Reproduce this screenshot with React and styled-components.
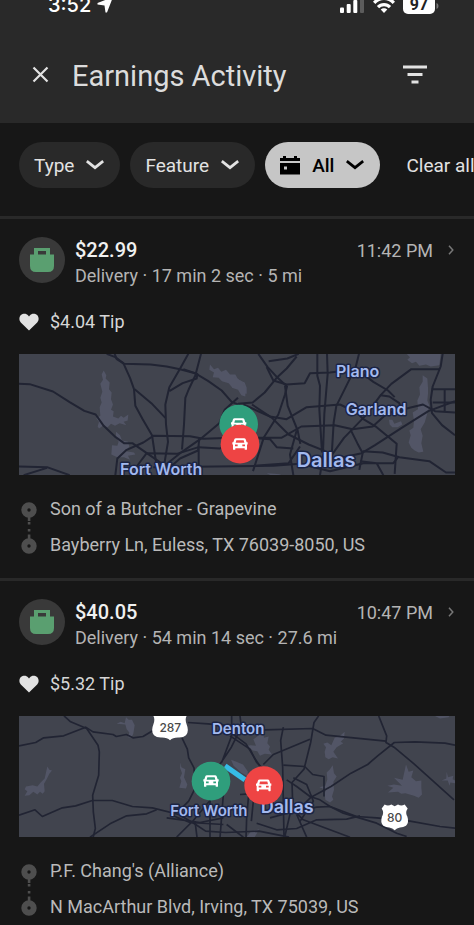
import React, { useState } from "react";
import styled, { createGlobalStyle } from "styled-components";

const GlobalStyle = createGlobalStyle`
  * {
    box-sizing: border-box;
  }
  body {
    margin: 0;
    background-color: #171717;
    color: #e2e2e2;
    font-family: Roboto, Inter, sans-serif;
    overflow-x: hidden;
  }
  button {
    font-family: inherit;
    border: none;
    padding: 0;
    background: none;
    color: inherit;
    cursor: pointer;
  }
  svg {
    display: block;
    flex-shrink: 0;
  }
`;

const Container = styled.div`
  min-height: 100vh;
  overflow: hidden;
`;

const Header = styled.header`
  background-color: #292929;
  height: 123px;
`;
const StatusBar = styled.div`
  display: flex;
  justify-content: space-between;
  align-items: flex-end;
  height: 14px;
  padding: 0 35px 0 48px;
  overflow: hidden;
`;
const StatusGroup = styled.div`
  display: flex;
  align-items: flex-end;
  gap: ${(props) => props.$gap}px;
`;
const Clock = styled.span`
  font-family: Inter, sans-serif;
  font-size: 20px;
  font-weight: 500;
  line-height: 18px;
  color: white;
`;
const TitleBar = styled.div`
  display: flex;
  align-items: center;
  height: 120px;
  padding: 0 47px 0 32px;
`;
const Title = styled.h1`
  flex: 1;
  margin: 0 0 0 23px;
  padding-top: 4px;
  font-size: 29px;
  font-weight: 400;
  line-height: 32px;
  color: #dcdcdc;
`;
const IconButton = styled.button`
  display: flex;
`;

const Filters = styled.div`
  display: flex;
  align-items: center;
  gap: 10px;
  padding: 19px 0 28px 19px;
  white-space: nowrap;
`;
const Chip = styled.button`
  display: flex;
  align-items: center;
  justify-content: space-between;
  gap: 12px;
  flex-shrink: 0;
  height: 46px;
  padding: 0 16px 0 15px;
  border-radius: 23px;
  font-size: 19px;
  font-weight: ${(props) => (props.$active ? 500 : 400)};
  background-color: ${(props) => (props.$active ? "#c6c6c6" : "#292929")};
  color: ${(props) => (props.$active ? "black" : "#e2e2e2")};
`;
const ClearButton = styled.button`
  flex-shrink: 0;
  margin-left: 16px;
  font-size: 19px;
  font-weight: 400;
`;

const Entry = styled.article`
  border-top: 3px solid #292929;
  padding: 18px 19px 15px;
`;
const EntryHead = styled.div`
  display: flex;
  gap: 10px;
  height: 46px;
`;
const Avatar = styled.div`
  display: flex;
  align-items: center;
  justify-content: center;
  flex-shrink: 0;
  width: 46px;
  height: 46px;
  border-radius: 50%;
  background-color: #393939;
`;
const Summary = styled.div`
  flex: 1;
  min-width: 0;
`;
const SummaryRow = styled.div`
  display: flex;
  justify-content: space-between;
  align-items: center;
  height: 26px;
`;
const Amount = styled.h2`
  margin: 0;
  font-size: 20px;
  font-weight: 500;
  line-height: 26px;
  color: #f0f0f0;
`;
const TimeButton = styled.button`
  display: flex;
  align-items: center;
  gap: 14px;
  font-size: 18px;
  font-weight: 400;
  color: #b4b4b4;
`;
const Detail = styled.p`
  margin: 0;
  font-size: 18px;
  font-weight: 400;
  line-height: 26px;
  color: #b4b4b4;
`;
const Tip = styled.div`
  display: flex;
  align-items: center;
  gap: 11px;
  margin: 27px 0 20px;
  font-size: 18px;
  font-weight: 400;
  line-height: 24px;
  color: #d6d6d6;
`;
const Map = styled.svg`
  width: 100%;
  height: 121px;
  background-color: #41444e;
`;
const MapLabel = styled.text`
  font-family: Inter, sans-serif;
  font-size: ${(props) => props.$size}px;
  font-weight: 600;
  fill: #a3b9ee;
  stroke: #1c2545;
  stroke-width: 9px;
  stroke-linejoin: round;
  paint-order: stroke;
`;
const ShieldText = styled.text`
  font-family: Inter, sans-serif;
  font-size: 36px;
  font-weight: 500;
  fill: #4a4a4a;
  text-anchor: middle;
`;
const Route = styled.div`
  display: flex;
  gap: 11px;
  margin-top: 16px;
`;
const Stops = styled.ul`
  list-style: none;
  margin: 0;
  padding: 0;
`;
const Stop = styled.li`
  font-size: 18px;
  font-weight: 400;
  line-height: 36px;
  color: #bababa;
  white-space: nowrap;
`;

function Chevron() {
  return (
    <svg width="18" height="10" viewBox="0 0 18 10" fill="none" stroke="currentColor" strokeWidth="2.8">
      <path d="M.8 1.2 9 7.6l8.2-6.4" />
    </svg>
  );
}

function CalendarIcon() {
  return (
    <svg width="20" height="20" viewBox="0 0 20 20">
      <path
        fill="currentColor"
        fillRule="evenodd"
        d="M0 3h3V1h3v2h8V1h3v2h3v3H0zM0 8h20v11.500H0zM4 11.500v3h3v-3z"
      />
    </svg>
  );
}

function BagIcon() {
  return (
    <svg width="24" height="24" viewBox="0 0 24 24">
      <path
        fill="#5a9f70"
        fillRule="evenodd"
        d="M4 0h16v6.500h4V18q0 6-6 6H6q-6 0-6-6V6.500h4zM8 3v3.500h8V3z"
      />
    </svg>
  );
}

function HeartIcon() {
  return (
    <svg width="20" height="18" viewBox="0 0 20 18">
      <path
        fill="#e2e2e2"
        d="M10 17.500 1.800 9.400C-.2 7.200 0 4 1.900 2.100 4 .1 7.500.3 9.200 2.400l.8 1 .8-1C12.500.3 16 .1 18.100 2.100 20 4 20.200 7.200 18.200 9.400z"
      />
    </svg>
  );
}

function RouteLine() {
  return (
    <svg width="20" height="72" viewBox="0 0 20 72">
      <g fill="none" stroke="#4e4e4e" strokeWidth="6">
        <circle cx="10" cy="19" r="4.700" />
        <circle cx="10" cy="55" r="4.700" />
      </g>
      <path
        fill="#4e4e4e"
        d="M8.800 26h2.600v4H8.800zM8.800 31h2.600v2.400H8.800zM8.800 38h2.600v2.600H8.800zM8.800 43.500h2.600v5H8.800z"
      />
    </svg>
  );
}

function CarPin({ x, y, color }) {
  return (
    <g transform={`translate(${x} ${y})`}>
      <circle r="58" fill={color} />
      <path
        fill="white"
        fillRule="evenodd"
        d="M-12-18H12Q16-18 17-15L20-6H23V1H21V15Q21 17 19 17H16Q14 17 14 15V12H-14V15Q-14 17-16 17H-19Q-21 17-21 15V1H-23V-6H-20L-17-15Q-16-18-12-18ZM-11-12-13-4H13L11-12ZM-15 1v5h8V1ZM7 1v5h8V1Z"
      />
    </g>
  );
}

function MetroMap() {
  return (
    <Map viewBox="27 28 1308 364" preserveAspectRatio="xMidYMid slice" role="img" aria-label="Trip map">
      <g fill="#525566">
        <path d="M281 78l8 14-2 10 12 12-2 20 8 10-2 20 6 16-6 16 8 4-2 16 16 6 8-8 8 6 14-10-2 18-12 4 8 10-20-6-14 8-12-6-10 10-14-4-12 8-4-6 4-14-8-10 12-8-2-26 6-14-4-14 6-18-6-24 8-12-4-16z" />
        <path d="M318 262l12 10 6 16 18 4 4 14-10 14 24 4 4 6-22 4 6 12-18-8-20 0-18-8 2-28 16 2 4-12-8-12z" />
        <path d="M600 60l12 14 12-4 10 12 14-6 12 14 16 0 8 14 20 10 6 16 0 18-14-2-10-14-20-4-10-12-20-6-10-10-18-2 4-14-14-8z" />
        <path d="M666 92l16 10 14 10 10 18 0 26-12-4-10-16-18-6z" />
        <path d="M1190 28l10 10-8 8 14 10 12-4 10 12 20-4 14 6 26-4 4-34z" />
        <path d="M1238 92l14 10 2 28 0 18-2 20 6 16-8 30-6 20-12 20 6 20-4 22 6 26-14 2-12-6-10-8-8-16 6-22-4-14 12-8 2-22-4-24 16-10-2-26 8-18-2-22 10-16z" />
        <path d="M1137 226l10 0 6 12 20-8 4 10-14 8-16 0-8-8z" />
        <path d="M770 386l12 6h24l8-2-20-2z" />
      </g>
      <g fill="none" stroke="#212433" strokeWidth="6" strokeLinejoin="round">
        <path d="M27 118l32 1 70 22 50 32 44 26 34 11 24 34 36 34 25 18 25 0 90 62" />
        <path d="M290 28l26 10 26 20 80 2 48 6 40 8 45 12 40 24 40 28 30 34 25 10" />
        <path d="M314 28l6 16 20 12 20 44 12 34 4 50 22 40 28 48 6 40 6 40" />
        <path d="M374 134l50 42 42 44" />
        <path d="M535 28l-25 45-32 55-12 52 2 60 6 52-10 60" />
        <path d="M573 28l-17 65-20 42-10 25-4 80-6 75" />
        <path d="M478 140l40-24 42-14 2-14-42-14" />
        <path d="M316 392l6-50 28-26 50-22 30-20 110 1 40 8 110-4 80 2" />
        <path d="M27 366l84 2 68 24M111 370l-70 22" />
        <path d="M380 366l30-40 90 2 66-20 64 4 30-18" />
        <path d="M456 370l60-48 60-42 52-44 16-40 40-36" />
        <path d="M460 386l50-44 54-24 4-36 M566 300v92M430 368l360-4 80-6" />
        <path d="M745 28l28 40 30 32 28 26-6 24-20 60-44 70-32 100" />
        <path d="M866 28l-34 14-56 8M860 36l-30 36-30 28-36 44-36 30-44 4" />
        <path d="M770 68l20 40 40 12 54-4 16-30 60-2 80-10 50 38 44 26 20 20" />
        <path d="M922 28v66l8 30-2 70 8 130M951 28l2 60-10 120-4 116" />
        <path d="M1047 28l-10 40-28 56-30 60-8 50-6 100" />
        <path d="M825 124l8 60 30 74 8 40 M700 180l80 36 50 8 60-36 100-8 50 24 20 20 40 24 60 50-6 90" />
        <path d="M726 180l60 40 50 50 60 30 50 20" />
        <path d="M724 280l90 0 60-34 100-4 54 12 60-8 40-36M720 280l60 4 20 24 50 4" />
        <path d="M850 392l-10-62 20-72 M724 200l-8 60 M870 306l-34 50-104 8" />
        <path d="M1290 74l-86 0-60 44-32 34-44 60-66 68-50 70" />
        <path d="M1298 28l-6 38-24 60-6 40 4 40 30 36 39 30" />
        <path d="M1335 170l-80 30-80 50-80 52-40 24-90 20-100 16" />
        <path d="M1112 152l26 4 30 20 8 30 M1335 204l-60-4-36-20-40 10-60 14" />
        <path d="M1265 134h70M1304 134v66M1268 174h67" />
        <path d="M1022 256l20 40 16 30-10 50 M1058 320l60 4 50 14 90 12 50 34h30" />
        <path d="M880 360l80 20 100-24 90 0 16-20M1050 350l50 6 20 36M940 330l-10 62" />
      </g>
      <MapLabel $size={48} x="978" y="96">Plano</MapLabel>
      <MapLabel $size={48} x="1007" y="212">Garland</MapLabel>
      <MapLabel $size={60} x="860" y="367">Dallas</MapLabel>
      <MapLabel $size={48} x="330" y="391">Fort Worth</MapLabel>
      <CarPin x={686} y={239} color="#2f9e7c" />
      <CarPin x={690} y={299} color="#ee4444" />
    </Map>
  );
}

function RegionMap() {
  return (
    <Map viewBox="27 24 1308 364" preserveAspectRatio="xMidYMid slice" role="img" aria-label="Trip map">
      <g fill="#525566">
        <path d="M112 176l6 10 8 2-8 10-8 16-8 14 2 22-6 8-8-6-8 8-12-8-12 10-14 2 8-14-8-6 4-8 20-4 14 4 10-12 12-12 4-18z" />
        <path d="M348 28l8 8 10 0 8 16-4 26-6 12-10-2 4-14-8-10-4-14-26-2 12-6 12 4z" />
        <path d="M512 164l2 14 12 6-4 24 10 22-4 12-20-2 6-20-4-10 6-14-6-16z" />
        <path d="M663 156l16 6 20 8 14 20 0 16-20-12-22-20z" />
        <path d="M758 68l4 22 14-4-4 20 8 10-4 10 10 14-22-2-14 6-8-14-14-2-16-14 10-2 16 2-8-20 12-8z" />
        <path d="M1004 72l-2 20-10 10 8 4-20 12-10 14 14 20-16-4-12 6-10-6-2-16 4-14-8-10 12-4 12 8 10-22 14-4z" />
        <path d="M968 172l4 24 8 10-10 16 2 24-6 20 4 10-10 8-14-8-2-20 4-10-20-8 18-4 6-20-2-20 10-10z" />
        <path d="M1188 170l8 22 14-4-6 20 14 12 16-2 0 22 2 20-10 10-14-6-26-8-12 2-10-6-30 2 16-14-18-6 20-4 24 4-24-24 26 6z" />
        <path d="M1310 192l4 16 16-4-2 10 7 4v8l-14-2-2 10-6-16-18 0 14-6z" />
        <path d="M1274 24l16 8 26-4 2-4z" />
        <path d="M748 364l-6 10-8 14h-24l12-16z" />
      </g>
      <g fill="none" stroke="#212433" strokeWidth="5" strokeLinejoin="round">
        <path d="M27 114l50-10 24-14 60-6 66-26 22 14 60 8 10 6 30-6 20 10 30-4 50-30 30-4" />
        <path d="M162 24l20 18 48 20 34 50 4 20-2 70-18 60 2 50 6 50-10 40" />
        <path d="M27 322l48-16 22 20 60-26 40-6 50-16 60 0 60 18 60 4 80 20 50 30 30 20 60 4 100-4 90 18" />
        <path d="M240 388l60-40 50-24 60-6 30-12" />
        <path d="M516 90l16 34 4 26 16 30 4 60-20 40-30 30M500 388l50-50 50-60" />
        <path d="M534 44l60 4 40 4 70 6 60 8 144-4 40 20 180 18" />
        <path d="M690 24l4 34-30 60-40 60M665 24v60l-30 80M660 84l60 40 20 40 20 20" />
        <path d="M600 270v118M640 260l-10 130M555 340l6 48M650 350l50 38M690 260l30-2M716 260l-6 70-2 60M732 260l-8 80" />
        <path d="M926 24l-14 20-10 60-20 80-36 40 2 60-24 104M820 58l-8 40 6 80 4 210M668 78l40 30 24 40 20 30" />
        <path d="M760 170l30-30 110-46M820 172l64 4 24 24 34 6 0 60" />
        <path d="M1106 24l24 60-2 20 24 14 60 50 60 54 60 54" />
        <path d="M1335 112l-30-6-90-4-62 2-50 40-30 26-50 26-60 40-60 32-40 40" />
        <path d="M830 216l30 20 40 30 30 10 30 20 80 30 60 4 100 10 90 16 56 6" />
        <path d="M780 330l60-16 80-16 40-2 40 20 100 30 60 30 30 10" />
        <path d="M740 346l60 20 60-4 60-26 90-2 40-10M840 296l40 40 80 30 60 22M860 320l30 68M850 210l40 20 20 50-40 60" />
        <path d="M480 320l60 24 100 6M470 330l100 14 70-14" />
      </g>
      <path d="M645 174l60 42" fill="none" stroke="#36bce6" strokeWidth="16" />
      <MapLabel $size={45} x="606" y="78">Denton</MapLabel>
      <MapLabel $size={45} x="481" y="326">Fort Worth</MapLabel>
      <MapLabel $size={54} x="752" y="316">Dallas</MapLabel>
      <path fill="white" d="M430 24h100q-6 10 0 26 8 20-2 32-8 8-24 7-16 0-24 8-8-8-24-8-16 1-24-7-10-12-2-32 6-16 0-26z" />
      <ShieldText x="481" y="74">287</ShieldText>
      <path fill="white" d="M1124 290q10 6 20 0l10 5 10-5q10 6 20 0l9 12q-8 12-1 24 6 18-4 28-8 5-18 5-10 2-16 8-6-6-16-8-10 0-18-5-10-10-4-28 7-12-1-24z" />
      <ShieldText x="1154" y="344">80</ShieldText>
      <CarPin x={603} y={220} color="#2f9e7c" />
      <CarPin x={761} y={233} color="#ee4444" />
    </Map>
  );
}

const trips = [
  {
    amount: "$22.99",
    time: "11:42 PM",
    detail: "Delivery · 17 min 2 sec · 5 mi",
    tip: "$4.04 Tip",
    map: <MetroMap />,
    stops: ["Son of a Butcher - Grapevine", "Bayberry Ln, Euless, TX 76039-8050, US"],
  },
  {
    amount: "$40.05",
    time: "10:47 PM",
    detail: "Delivery · 54 min 14 sec · 27.6 mi",
    tip: "$5.32 Tip",
    map: <RegionMap />,
    stops: ["P.F. Chang's (Alliance)", "N MacArthur Blvd, Irving, TX 75039, US"],
  },
];

function Trip({ trip }) {
  return (
    <Entry>
      <EntryHead>
        <Avatar>
          <BagIcon />
        </Avatar>
        <Summary>
          <SummaryRow>
            <Amount>{trip.amount}</Amount>
            <TimeButton>
              {trip.time}
              <svg width="8" height="10" viewBox="0 0 8 10" fill="none" stroke="#777" strokeWidth="1.500">
                <path d="M2 .8 5.800 5 2 9.200" />
              </svg>
            </TimeButton>
          </SummaryRow>
          <Detail>{trip.detail}</Detail>
        </Summary>
      </EntryHead>
      <Tip>
        <HeartIcon />
        {trip.tip}
      </Tip>
      {trip.map}
      <Route>
        <RouteLine />
        <Stops>
          {trip.stops.map((stop) => (
            <Stop key={stop}>{stop}</Stop>
          ))}
        </Stops>
      </Route>
    </Entry>
  );
}

function App() {
  const [active, setActive] = useState("All");

  return (
    <Container>
      <GlobalStyle />
      <Header>
        <StatusBar>
          <StatusGroup $gap={6}>
            <Clock>3:52</Clock>
            <svg width="16" height="16" viewBox="0 0 16 16">
              <path fill="white" d="M16-1 10 14.500H8.500L7.500 7.500.5 6.500V5z" />
            </svg>
          </StatusGroup>
          <StatusGroup $gap={8}>
            <svg width="25" height="18" viewBox="0 0 25 18">
              <g fill="white">
                <rect x="0" y="11.500" width="4" height="5.500" rx="1" />
                <rect x="6.700" y="8" width="4" height="9" rx="1" />
                <rect x="13.300" y="4" width="4" height="13" rx="1" />
                <rect x="20" y="0" width="4" height="17" rx="1" fill="#5c5c5c" />
              </g>
            </svg>
            <svg width="22" height="18" viewBox="0 0 22 18">
              <g fill="none" stroke="white" strokeWidth="3.200">
                <path d="M1.200 6.800C6.500 1 15.500 1 20.800 6.800" />
                <path d="M5 11.200c3.300-3.500 8.700-3.500 12 0" />
              </g>
              <path fill="white" d="M11 17l-3.300-3.500c1.800-1.800 4.800-1.800 6.600 0z" />
            </svg>
            <svg width="36" height="18" viewBox="0 0 36 18">
              <rect x="0" y="0" width="32" height="18" rx="5" fill="white" />
              <path fill="#777" d="M33.500 7q2 .5 2 3t-2 3z" />
              <text x="16" y="14" textAnchor="middle" fontSize="16" fontWeight="700" fill="#222">
                97
              </text>
            </svg>
          </StatusGroup>
        </StatusBar>
        <TitleBar>
          <IconButton aria-label="Close">
            <svg width="17" height="17" viewBox="0 0 17 17" stroke="#e2e2e2" strokeWidth="2.200">
              <path d="M1.500 1.500l14 14M15.500 1.500l-14 14" />
            </svg>
          </IconButton>
          <Title>Earnings Activity</Title>
          <IconButton aria-label="Filter">
            <svg width="24" height="19" viewBox="0 0 24 19" fill="#e2e2e2">
              <path d="M0 .5h24v3H0zM4.500 8h15v3h-15zM8.500 15.500h7v3h-7z" />
            </svg>
          </IconButton>
        </TitleBar>
      </Header>
      <Filters>
        {["Type", "Feature", "All"].map((name) => (
          <Chip key={name} $active={active === name} aria-haspopup="dialog" onClick={() => setActive(name)}>
            {name === "All" && <CalendarIcon />}
            {name}
            <Chevron />
          </Chip>
        ))}
        <ClearButton onClick={() => setActive("")}>Clear all</ClearButton>
      </Filters>
      {trips.map((trip) => (
        <Trip key={trip.amount} trip={trip} />
      ))}
    </Container>
  );
}

export default App;
